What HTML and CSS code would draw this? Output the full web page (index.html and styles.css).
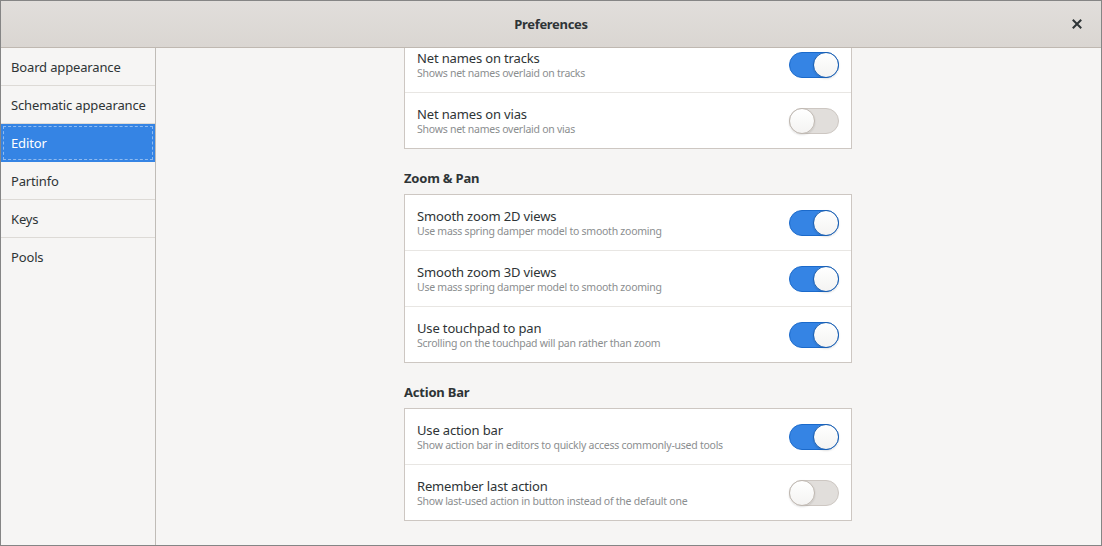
FILE: index.html
```html
<!DOCTYPE html>
<html>
<head>
<meta charset="utf-8">
<link rel="stylesheet" href="styles.css">
</head>
<body>
<div class="window">
  <header class="titlebar">
    <span class="title">Preferences</span>
    <button class="close" aria-label="Close">
      <svg width="10" height="10" viewBox="0 0 10 10"><path d="M1.5 1.5 L8.5 8.5 M8.5 1.5 L1.5 8.5" stroke="#2e3436" stroke-width="2" stroke-linecap="square"/></svg>
    </button>
  </header>
  <div class="main">
    <nav class="sidebar">
      <div class="nav-row">Board appearance</div>
      <div class="nav-row">Schematic appearance</div>
      <div class="nav-row selected">Editor</div>
      <div class="nav-row">Partinfo</div>
      <div class="nav-row">Keys</div>
      <div class="nav-row last">Pools</div>
    </nav>
    <section class="content">
      <div class="page">
        <div class="card first">
          <div class="row">
            <div class="labels"><div class="label">Net names on tracks</div><div class="sub">Shows net names overlaid on tracks</div></div>
            <div class="switch on"><span class="knob"></span></div>
          </div>
          <div class="row">
            <div class="labels"><div class="label">Net names on vias</div><div class="sub">Shows net names overlaid on vias</div></div>
            <div class="switch"><span class="knob"></span></div>
          </div>
        </div>
        <h2 class="heading">Zoom &amp; Pan</h2>
        <div class="card">
          <div class="row">
            <div class="labels"><div class="label">Smooth zoom 2D views</div><div class="sub">Use mass spring damper model to smooth zooming</div></div>
            <div class="switch on"><span class="knob"></span></div>
          </div>
          <div class="row">
            <div class="labels"><div class="label">Smooth zoom 3D views</div><div class="sub">Use mass spring damper model to smooth zooming</div></div>
            <div class="switch on"><span class="knob"></span></div>
          </div>
          <div class="row">
            <div class="labels"><div class="label">Use touchpad to pan</div><div class="sub">Scrolling on the touchpad will pan rather than zoom</div></div>
            <div class="switch on"><span class="knob"></span></div>
          </div>
        </div>
        <h2 class="heading">Action Bar</h2>
        <div class="card">
          <div class="row">
            <div class="labels"><div class="label">Use action bar</div><div class="sub">Show action bar in editors to quickly access commonly-used tools</div></div>
            <div class="switch on"><span class="knob"></span></div>
          </div>
          <div class="row">
            <div class="labels"><div class="label">Remember last action</div><div class="sub">Show last-used action in button instead of the default one</div></div>
            <div class="switch"><span class="knob"></span></div>
          </div>
        </div>
      </div>
    </section>
  </div>
</div>
</body>
</html>
```
FILE: styles.css
```css
* { box-sizing: border-box; }
html, body { margin: 0; padding: 0; }
body {
  font-family: "Noto Sans", "Open Sans", sans-serif;
  font-size: 13px;
  color: #2e3436;
  background: #f6f5f4;
}
.window {
  width: 1102px;
  height: 546px;
  border: 1px solid #858585;
  display: flex;
  flex-direction: column;
  overflow: hidden;
  background: #f6f5f4;
}
.titlebar {
  height: 47px;
  flex: none;
  background: linear-gradient(#e1dedb, #dad6d2);
  border-bottom: 1px solid #bfb8b1;
  display: flex;
  align-items: center;
  justify-content: center;
  position: relative;
}
.title {
  font-weight: bold;
  font-size: 13px;
  letter-spacing: -0.3px;
  color: #2e3436;
}
.close {
  position: absolute;
  right: 14px;
  top: 13px;
  width: 20px;
  height: 20px;
  border: 0;
  background: transparent;
  padding: 0;
  display: flex;
  align-items: center;
  justify-content: center;
}
.main {
  flex: 1;
  display: flex;
  min-height: 0;
}
.sidebar {
  width: 155px;
  flex: none;
  border-right: 1px solid #c0bcb7;
  background: #f6f5f4;
}
.nav-row {
  height: 38px;
  border-bottom: 1px solid #dddad6;
  padding-left: 10px;
  display: flex;
  align-items: center;
  letter-spacing: -0.15px;
}
.nav-row.last { border-bottom: 0; }
.nav-row.selected {
  background: #3584e4;
  border-bottom-color: #3584e4;
  color: #ffffff;
  outline: 1px dashed rgba(255,255,255,0.45);
  outline-offset: -3px;
}
.content {
  flex: 1;
  overflow: hidden;
  display: flex;
  justify-content: center;
  padding-right: 1px;
}
.page {
  width: 448px;
  margin-top: -12px;
}
.card {
  background: #ffffff;
  border: 1px solid #cdc7c2;
}
.row {
  height: 56px;
  border-bottom: 1px solid #e8e6e3;
  display: flex;
  align-items: center;
  padding: 0 12px;
}
.row:last-child { height: 55px; border-bottom: 0; }
.labels { flex: 1; }
.label {
  font-size: 13px;
  line-height: 16px;
  letter-spacing: -0.15px;
  color: #2e3436;
}
.sub {
  font-size: 10.5px;
  line-height: 14px;
  letter-spacing: -0.25px;
  color: #8b8e8f;
}
.heading {
  margin: 19px 0 6px;
  font-size: 13px;
  line-height: 20px;
  font-weight: bold;
  letter-spacing: -0.2px;
  color: #2e3436;
}
.switch {
  width: 50px;
  height: 26px;
  border-radius: 13px;
  background: #e1dedb;
  border: 1px solid #cdc7c2;
  position: relative;
  flex: none;
}
.switch .knob {
  position: absolute;
  top: -1px;
  left: -1px;
  width: 26px;
  height: 26px;
  border-radius: 50%;
  background: linear-gradient(#ffffff, #f4f3f2);
  border: 1px solid #bfb8b1;
  box-shadow: 0 1px 2px rgba(0,0,0,0.12);
}
.switch.on {
  background: #3584e4;
  border-color: #1b6acb;
}
.switch.on .knob {
  left: auto;
  right: -1px;
  border-color: #1b5fb0;
}
```
